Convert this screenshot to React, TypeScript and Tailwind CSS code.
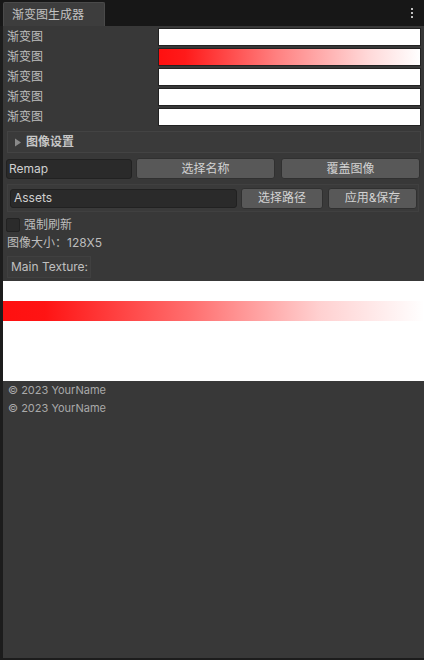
import React from "react";

const font = { fontFamily: '"Inter", "Noto Sans CJK SC", sans-serif' };

function GradField({ grad }: { grad?: boolean }) {
  return (
    <div
      className={
        "ml-auto mr-[3px] h-[18px] w-[263px] border border-[#222222] " +
        (grad ? "bg-[linear-gradient(90deg,#ff1010_0%,#ff1a1a_10%,#ff8080_45%,#ffd8d8_80%,#ffffff_100%)]" : "bg-white")
      }
    />
  );
}

export default function App() {
  const rows = [false, true, false, false, false];
  return (
    <div className="w-[424px] h-[660px] bg-[#1c1c1c] flex flex-col text-[12px] text-[#bdbdbd]" style={font}>
      {/* top tab bar */}
      <div className="h-[26px] bg-[#171717] flex items-end pl-[3px] relative">
        <div className="h-[24px] w-[102px] bg-[#3d3d3d] border-t border-l border-r border-[#4a4a4a] rounded-t-[2px] flex items-center pl-[8px] text-[12px] text-[#c2c2c2]">
          渐变图生成器
        </div>
        <div className="absolute right-[11px] top-[8px] flex flex-col gap-[2px]">
          <div className="w-[2px] h-[2px] bg-[#c0c0c0]" />
          <div className="w-[2px] h-[2px] bg-[#c0c0c0]" />
          <div className="w-[2px] h-[2px] bg-[#c0c0c0]" />
        </div>
      </div>

      {/* panel */}
      <div className="flex-1 ml-[3px] mb-[2px] bg-[#383838] flex flex-col">
        <div className="pt-[2px] flex flex-col gap-[2px]">
          {rows.map((g, i) => (
            <div key={i} className="h-[18px] flex items-center pl-[4px]">
              <span className="leading-none">渐变图</span>
              <GradField grad={g} />
            </div>
          ))}
        </div>

        {/* foldout */}
        <div className="mt-[5px] mx-[4px] mr-[3px] h-[22px] border border-[#434343] bg-[#3a3a3a] flex items-center pl-[6px] gap-[4px]">
          <svg width="8" height="9" viewBox="0 0 8 9"><path d="M1 0.5 L7 4.5 L1 8.5 Z" fill="#8a8a8a" /></svg>
          <span className="font-bold text-[12px] text-[#c6c6c6]">图像设置</span>
        </div>

        {/* remap row */}
        <div className="mt-[5px] flex items-center h-[21px] pl-[3px] pr-[4px]">
          <div className="w-[126px] h-[20px] bg-[#2a2a2a] border border-[#212121] rounded-[3px] flex items-center pl-[2px] text-[12px] text-[#d0d0d0]">
            Remap
          </div>
          <button className="ml-[4px] w-[139px] h-[21px] bg-[#585858] rounded-[3px] text-[12px] text-[#d2d2d2] border border-[#303030]">选择名称</button>
          <button className="ml-[6px] w-[139px] h-[21px] bg-[#585858] rounded-[3px] text-[12px] text-[#d2d2d2] border border-[#303030]">覆盖图像</button>
        </div>

        {/* assets row */}
        <div className="mt-[5px] mx-[4px] mr-[5px] h-[28px] border border-[#404040] bg-[#3a3a3a] flex items-center pl-[2px]">
          <div className="w-[227px] h-[19px] bg-[#2a2a2a] border border-[#212121] rounded-[3px] flex items-center pl-[3px] text-[12px] text-[#d0d0d0]">
            Assets
          </div>
          <button className="ml-[4px] w-[82px] h-[21px] bg-[#585858] rounded-[3px] text-[12px] text-[#d2d2d2] border border-[#303030]">选择路径</button>
          <button className="ml-[5px] w-[89px] h-[21px] bg-[#585858] rounded-[3px] text-[12px] text-[#d2d2d2] border border-[#303030]">应用&amp;保存</button>
        </div>

        {/* checkbox */}
        <div className="mt-[5px] flex items-center pl-[3px] h-[15px]">
          <div className="w-[14px] h-[14px] bg-[#2b2b2b] border border-[#222222] rounded-[2px]" />
          <span className="ml-[4px]">强制刷新</span>
        </div>

        <div className="mt-[2px] pl-[4px] h-[17px] flex items-center text-[#bdbdbd]">图像大小：128X5</div>

        <div className="mt-[5px] ml-[4px] w-[84px] h-[22px] border border-[#404040] bg-[#3a3a3a] flex items-center pl-[3px] text-[#c0c0c0] whitespace-nowrap">
          Main Texture:
        </div>

        {/* texture preview */}
        <div className="mt-[3px] h-[100px] bg-white flex flex-col pt-[20px]">
          <div className="h-[20px] bg-[linear-gradient(90deg,#ff1010_0%,#ff1414_10%,#ff7070_45%,#ffd0d0_75%,#ffffff_100%)]" />
        </div>

        <div className="mt-[1px] pl-[5px] text-[11px] text-[#a9a9a9] flex flex-col">
          <div className="h-[17px] flex items-center">© 2023 YourName</div>
          <div className="h-[18px] flex items-center">© 2023 YourName</div>
        </div>
      </div>
    </div>
  );
}
